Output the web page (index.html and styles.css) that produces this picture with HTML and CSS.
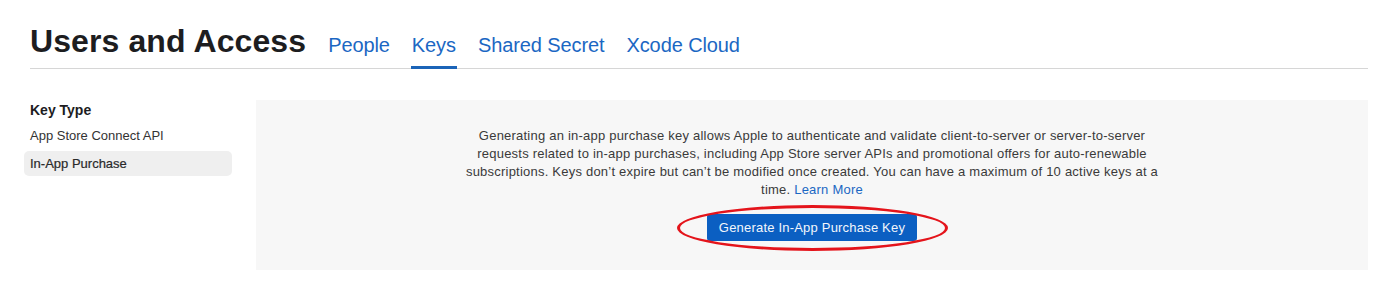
FILE: index.html
```html
<!DOCTYPE html>
<html lang="en">
<head>
<meta charset="utf-8">
<title>Users and Access</title>
<link rel="stylesheet" href="styles.css">
</head>
<body>
<div class="page">
  <header class="header">
    <h1 class="title">Users and Access</h1>
    <nav class="tabs">
      <a class="tab">People</a>
      <a class="tab active">Keys</a>
      <a class="tab">Shared Secret</a>
      <a class="tab">Xcode Cloud</a>
    </nav>
  </header>
  <main class="main">
    <aside class="sidebar">
      <h2 class="side-heading">Key Type</h2>
      <ul class="side-list">
        <li class="side-item">App Store Connect API</li>
        <li class="side-item selected">In-App Purchase</li>
      </ul>
    </aside>
    <section class="panel">
      <p class="desc">Generating an in-app purchase key allows Apple to authenticate and validate client-to-server or server-to-server requests related to in-app purchases, including App Store server APIs and promotional offers for auto-renewable subscriptions. Keys don’t expire but can’t be modified once created. You can have a maximum of 10 active keys at a time. <a class="link">Learn More</a></p>
      <div class="btn-wrap">
        <button class="btn">Generate In-App Purchase Key</button>
        <span class="annotation"></span>
      </div>
    </section>
  </main>
</div>
</body>
</html>
```
FILE: styles.css
```css
* { box-sizing: border-box; }
html, body { margin: 0; padding: 0; background: #ffffff; }
body {
  font-family: "Liberation Sans", Arial, sans-serif;
  color: #1d1d1f;
}
.page {
  padding: 0 26px 0 30px;
}
.header {
  display: flex;
  align-items: flex-end;
  padding-top: 21px;
  border-bottom: 1px solid #d6d6d6;
}
.title {
  margin: 0 0 7px 0;
  font-size: 32px;
  line-height: 40px;
  font-weight: 700;
  color: #1d1d1f;
  letter-spacing: 0.1px;
}
.tabs {
  display: flex;
  align-items: flex-end;
  gap: 20px;
  margin-left: 21px;
}
.tab {
  display: block;
  font-size: 20px;
  line-height: 24px;
  letter-spacing: -0.1px;
  color: #1b67c3;
  padding: 0 1px 9px;
  border-bottom: 3px solid transparent;
  margin-bottom: -1px;
  cursor: pointer;
}
.tab.active {
  border-bottom-color: #1b64b8;
}
.main {
  display: flex;
  align-items: flex-start;
  margin-top: 31px;
}
.sidebar {
  width: 208px;
  margin-left: -6px;
  flex: none;
}
.side-heading {
  margin: 1px 0 0 0;
  padding-left: 6px;
  font-size: 14px;
  line-height: 18px;
  font-weight: 700;
  color: #1d1d1f;
}
.side-list {
  list-style: none;
  margin: 4px 0 0 0;
  padding: 0;
  display: flex;
  flex-direction: column;
  gap: 3px;
}
.side-item {
  font-size: 13px;
  line-height: 17px;
  padding: 4px 6px;
  color: #333333;
  border-radius: 5px;
}
.side-item.selected {
  background: #efefef;
  color: #2a2a2a;
  -webkit-text-stroke: 0.2px #2a2a2a;
}
.panel {
  flex: 1;
  margin-left: 24px;
  background: #f7f7f7;
  padding: 27px 0 29px;
  display: flex;
  flex-direction: column;
  align-items: center;
}
.desc {
  margin: 0;
  max-width: 700px;
  text-align: center;
  font-size: 13px;
  line-height: 18px;
  letter-spacing: 0.22px;
  color: #3a3a3a;
}
.link {
  color: #1b67c3;
  cursor: pointer;
}
.btn-wrap {
  position: relative;
  margin-top: 15px;
}
.btn {
  display: block;
  height: 27px;
  width: 210px;
  padding: 0;
  border: none;
  border-radius: 3px;
  background: #0b5fc2;
  color: #f2f6fc;
  font-family: "Liberation Sans", Arial, sans-serif;
  font-size: 13px;
  letter-spacing: 0.2px;
  cursor: pointer;
}
.annotation {
  position: absolute;
  left: -30px;
  top: -9px;
  width: 271px;
  height: 46px;
  border: 3px solid #e4141b;
  border-radius: 50%;
  pointer-events: none;
}
```
